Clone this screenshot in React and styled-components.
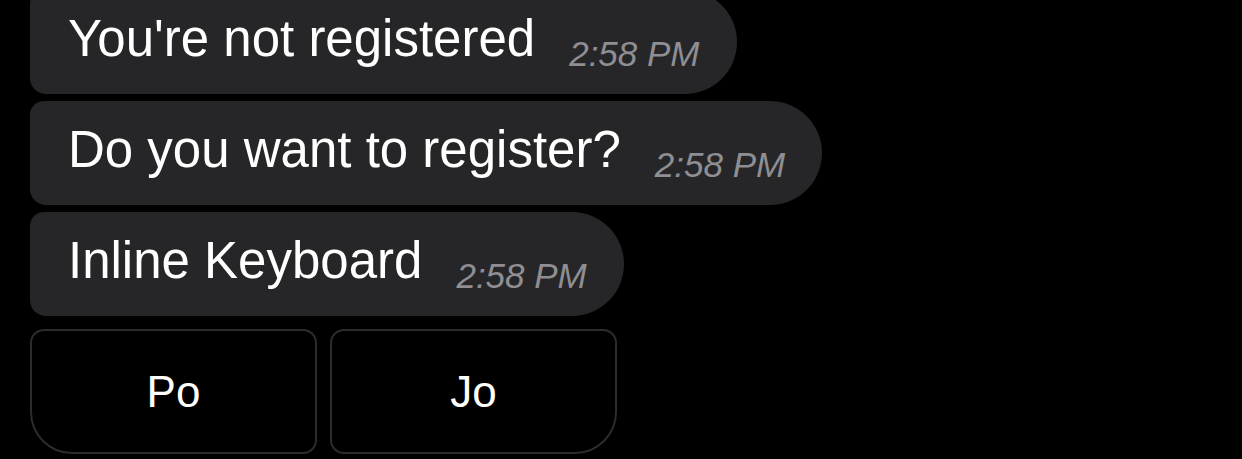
import React from "react";
import styled, { createGlobalStyle } from "styled-components";

const GlobalStyle = createGlobalStyle`
  html, body {
    margin: 0;
    padding: 0;
    background: #000;
    overflow: hidden;
  }
  body {
    font-family: "Liberation Sans", Arial, sans-serif;
  }
`;

const Chat = styled.div`
  display: flex;
  flex-direction: column;
  align-items: flex-start;
  gap: 7px;
  padding-left: 30px;
  margin-top: -10px;
  height: 469px;
  background: #000;
`;

const Bubble = styled.div`
  display: flex;
  align-items: flex-start;
  height: 104px;
  box-sizing: border-box;
  padding: 0 37px 0 38px;
  background: #262628;
  border-radius: 14px 52px 52px 16px;
`;

const Text = styled.span`
  padding-top: 20px;
  font-size: 51px;
  line-height: 58px;
  color: #fff;
  white-space: nowrap;
`;

const Time = styled.span`
  margin-top: 44px;
  margin-left: 34px;
  font-size: 35px;
  line-height: 40px;
  font-style: italic;
  color: #8e8e93;
  white-space: nowrap;
`;

const Keyboard = styled.div`
  display: grid;
  grid-template-columns: 287px 287px;
  gap: 13px;
  margin-top: 6px;
`;

const KeyButton = styled.button`
  height: 125px;
  box-sizing: border-box;
  background: #000;
  border: 2px solid #2c2c2e;
  border-radius: ${(p) => (p.side === "left" ? "14px 14px 14px 42px" : "14px 14px 42px 14px")};
  color: #fff;
  font-family: "Liberation Sans", Arial, sans-serif;
  font-size: 44px;
  padding: 0;
  cursor: pointer;
`;

const messages = [
  { text: "You're not registered", time: "2:58 PM" },
  { text: "Do you want to register?", time: "2:58 PM" },
  { text: "Inline Keyboard", time: "2:58 PM" },
];

export default function App() {
  return (
    <>
      <GlobalStyle />
      <Chat>
        {messages.map((m, i) => (
          <Bubble key={i}>
            <Text>{m.text}</Text>
            <Time>{m.time}</Time>
          </Bubble>
        ))}
        <Keyboard>
          <KeyButton side="left">Po</KeyButton>
          <KeyButton side="right">Jo</KeyButton>
        </Keyboard>
      </Chat>
    </>
  );
}
